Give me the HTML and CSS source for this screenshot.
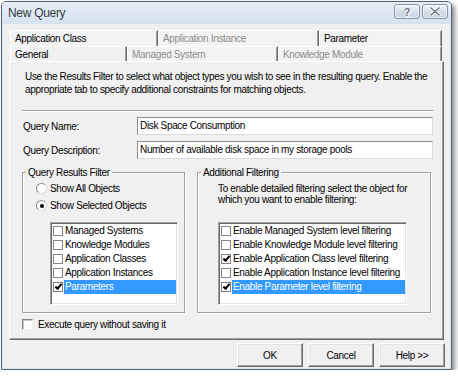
FILE: index.html
```html
<!DOCTYPE html>
<html lang="en">
<head>
  <meta charset="UTF-8" />
  <meta name="viewport" content="width=device-width, initial-scale=1.0"/>
  <title>New Query</title>
  <link rel="stylesheet" href="styles.css">
</head>
<body>

  <div class="window">
    <div class="titlebar">
      <span class="title">New Query</span>
      <div class="caption-buttons">
        <button class="caption-btn help">?</button>
        <button class="caption-btn close">
          <svg width="12" height="9" viewBox="0 0 12 9">
            <path d="M2 1 L10 8 M10 1 L2 8" stroke="#fff" stroke-width="3.2" stroke-linecap="round"/>
            <path d="M2 1 L10 8 M10 1 L2 8" stroke="#6d7884" stroke-width="1.6" stroke-linecap="round"/>
          </svg>
        </button>
      </div>
    </div>

    <div class="client">
      <div class="tabs">
        <div class="tab-row back">
          <div class="tab" style="width: 148px">Application Class</div>
          <div class="tab disabled" style="width: 161px">Application Instance</div>
          <div class="tab" style="width: 123px">Parameter</div>
        </div>
        <div class="tab-row front">
          <div class="tab active" style="width: 117px">General</div>
          <div class="tab disabled" style="width: 151px">Managed System</div>
          <div class="tab disabled" style="width: 164px">Knowledge Module</div>
        </div>
      </div>

      <div class="panel">
        <p class="intro">Use the Results Filter to select what object types you wish to see in the resulting query. Enable the<br>appropriate tab to specify additional constraints for matching objects.</p>
        <hr class="etched">

        <div class="fields">
          <label>Query Name:</label>
          <div class="textbox">Disk Space Consumption</div>
          <label>Query Description:</label>
          <div class="textbox">Number of available disk space in my storage pools</div>
        </div>

        <div class="groups">
          <fieldset class="group results">
            <legend>Query Results Filter</legend>
            <div class="radio"><span class="radio-mark"></span>Show All Objects</div>
            <div class="radio checked"><span class="radio-mark"></span>Show Selected Objects</div>
            <ul class="checklist">
              <li><span class="check"></span><span class="item">Managed Systems</span></li>
              <li><span class="check"></span><span class="item">Knowledge Modules</span></li>
              <li><span class="check"></span><span class="item">Application Classes</span></li>
              <li><span class="check"></span><span class="item">Application Instances</span></li>
              <li class="selected"><span class="check on"></span><span class="item">Parameters</span></li>
            </ul>
          </fieldset>

          <fieldset class="group filtering">
            <legend>Additional Filtering</legend>
            <p class="note">To enable detailed filtering select the object for<br>which you want to enable filtering:</p>
            <ul class="checklist">
              <li><span class="check"></span><span class="item">Enable Managed System level filtering</span></li>
              <li><span class="check"></span><span class="item">Enable Knowledge Module level filtering</span></li>
              <li><span class="check on"></span><span class="item">Enable Application Class level filtering</span></li>
              <li><span class="check"></span><span class="item">Enable Application Instance level filtering</span></li>
              <li class="selected"><span class="check on"></span><span class="item">Enable Parameter level filtering</span></li>
            </ul>
          </fieldset>
        </div>

        <div class="execute"><span class="check sunken"></span>Execute query without saving it</div>
      </div>

      <div class="footer">
        <button class="btn">OK</button>
        <button class="btn">Cancel</button>
        <button class="btn">Help &gt;&gt;</button>
      </div>
    </div>
  </div>

</body>
</html>
```

FILE: styles.css
```css
:root {
  --face: #f0f0f0;
  --shadow: #a0a0a0;
  --dark: #696969;
  --select: #3399ff;
  --ui-font: "Liberation Sans", Arial, sans-serif;
}

body {
  margin: 0;
  background: #fff;
  font-family: var(--ui-font);
  font-size: 10px;
  letter-spacing: -0.33px;
  color: #000;
}

.window {
  box-sizing: border-box;
  width: 451px;
  height: 369px;
  margin: 1px 0 0 1px;
  border: 1px solid #56626f;
  border-radius: 5px 5px 1px 1px;
  background: #dbe5f0;
  box-shadow: 3px 3px 5px rgba(0, 0, 0, 0.45);
  display: flex;
  flex-direction: column;
}

.titlebar {
  height: 22px;
  flex: none;
  display: flex;
  justify-content: space-between;
  align-items: flex-start;
  padding: 0 3px 0 6px;
  border-radius: 4px 4px 0 0;
  background: linear-gradient(#e6eef7, #d5e2ef);
}

.title {
  font-size: 12px;
  letter-spacing: -0.3px;
  line-height: 22px;
  color: #353a42;
}

.caption-buttons {
  display: flex;
  gap: 2px;
  margin-top: 2px;
}

.caption-btn {
  width: 26px;
  height: 15px;
  padding: 0;
  border: 1px solid #8593a2;
  border-radius: 3px;
  background: linear-gradient(#f1f5f9, #d3dde8 55%, #c8d4e1);
  box-shadow: inset 0 0 0 1px rgba(255, 255, 255, 0.6);
  display: flex;
  align-items: center;
  justify-content: center;
}

.caption-btn.help {
  font-family: var(--ui-font);
  font-size: 11px;
  font-weight: bold;
  color: #6d7884;
  text-shadow: 0 0 1px #fff, 1px 1px 0 #fff;
}

.client {
  flex: 1;
  margin: 0 1px 1px 1px;
  padding: 6px 6px 0 6px;
  background: var(--face);
}

/* tab strip */
.tabs {
  margin-left: 1px;
}

.tab-row {
  display: flex;
}

.tab-row.back {
  height: 16px;
}

.tab-row.front {
  height: 15px;
}

.tab {
  box-sizing: border-box;
  height: 100%;
  padding-left: 4px;
  line-height: 15px;
  border-top: 1px solid #fff;
  border-left: 1px solid #fff;
  border-right: 1px solid var(--dark);
  box-shadow: inset -1px 0 0 var(--shadow);
  background: #f3f3f3;
  white-space: nowrap;
}

.tab.disabled {
  color: #8d8d8d;
}

.tab.active {
  background: var(--face);
}

/* page */
.panel {
  box-sizing: border-box;
  height: 279px;
  padding: 0 10px 0 12px;
  border-top: 1px solid #fff;
  border-left: 1px solid #fff;
  border-right: 1px solid var(--dark);
  border-bottom: 1px solid var(--dark);
  box-shadow: inset -1px -1px 0 var(--shadow);
}

.intro {
  margin: 8px 0 0 3px;
  line-height: 13px;
  white-space: nowrap;
}

.etched {
  margin: 14px 0 0 0;
  height: 0;
  border: 0;
  border-top: 1px solid var(--shadow);
  border-bottom: 1px solid #fff;
}

.fields {
  display: grid;
  grid-template-columns: 115px 1fr;
  row-gap: 6px;
  margin-top: 5px;
  align-items: center;
}

.fields label {
  padding-left: 1px;
}

.textbox {
  box-sizing: border-box;
  height: 18px;
  line-height: 16px;
  padding-left: 2px;
  background: #fff;
  border: 1px solid #dcdcdc;
  border-top-color: #8c8c8c;
  border-left-color: #8c8c8c;
}

.groups {
  display: grid;
  grid-template-columns: 163px 234px;
  gap: 12px;
  margin-top: 7px;
}

.group {
  margin: 0;
  min-width: 0;
  height: 147px;
  box-sizing: border-box;
  padding: 1px 6px 7px 0;
  border: 1px solid var(--shadow);
  box-shadow: 1px 1px 0 #fff, inset 1px 1px 0 #fff;
}

.group legend {
  margin-left: 3px;
  padding: 0 2px;
  line-height: 13px;
  background: var(--face);
}

.radio {
  height: 17px;
  margin-left: 13px;
  display: flex;
  align-items: center;
}

.radio-mark {
  box-sizing: border-box;
  width: 11px;
  height: 11px;
  margin-right: 3px;
  border-radius: 50%;
  border: 1px solid;
  border-color: #8a8a8a #d8d8d8 #d8d8d8 #8a8a8a;
  background: #fff;
  display: flex;
  align-items: center;
  justify-content: center;
}

.radio.checked .radio-mark::after {
  content: "";
  width: 4px;
  height: 4px;
  border-radius: 50%;
  background: #000;
}

.note {
  margin: 3px 0 0 20px;
  line-height: 11px;
  white-space: nowrap;
}

.checklist {
  list-style: none;
  box-sizing: border-box;
  height: 83px;
  margin: 8px 0 0 27px;
  padding: 1px 0 0 1px;
  background: #fff;
  border: 1px solid #fff;
  border-top-color: var(--shadow);
  border-left-color: var(--shadow);
  box-shadow: inset 1px 1px 0 var(--dark), inset -1px -1px 0 #e3e3e3;
}

.results .checklist {
  width: 128px;
}

.filtering .checklist {
  width: 189px;
  margin: 17px 0 0 20px;
}

.checklist li {
  height: 14px;
  display: flex;
  align-items: center;
  margin: 0 1px;
}

.check {
  box-sizing: border-box;
  flex: none;
  width: 10px;
  height: 10px;
  margin-right: 1px;
  border: 1px solid #848484;
  background: #fff;
  display: flex;
  align-items: center;
  justify-content: center;
}

.check.on::after {
  content: "";
  width: 5px;
  height: 2px;
  margin-top: -2px;
  border-left: 2px solid #000;
  border-bottom: 2px solid #000;
  transform: rotate(-50deg);
}

.item {
  flex: 1;
  height: 100%;
  line-height: 14px;
  padding-left: 1px;
  white-space: nowrap;
}

.selected .item {
  background: var(--select);
  color: #fff;
}

.execute {
  display: flex;
  align-items: center;
  height: 11px;
  margin-top: 6px;
}

.check.sunken {
  width: 11px;
  height: 11px;
  margin-right: 5px;
  border-color: #808080 #f4f4f4 #f4f4f4 #808080;
  box-shadow: inset 1px 1px 0 #c8c8c8;
}

/* dialog buttons */
.footer {
  display: flex;
  justify-content: flex-end;
  gap: 5px;
  margin: 3px -1px 0 0;
}

.btn {
  box-sizing: border-box;
  width: 66px;
  height: 24px;
  padding: 0;
  font-family: var(--ui-font);
  font-size: 10px;
  letter-spacing: -0.33px;
  color: #000;
  background: var(--face);
  border: 1px solid;
  border-color: #fff var(--dark) var(--dark) #fff;
  box-shadow: inset -1px -1px 0 var(--shadow), inset 1px 1px 0 #e3e3e3;
}
```
